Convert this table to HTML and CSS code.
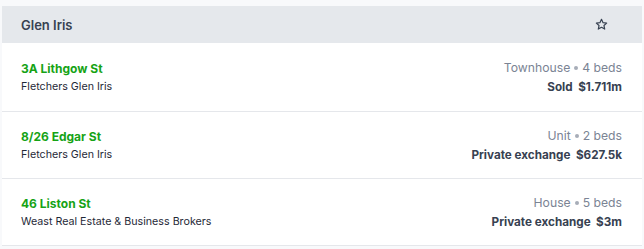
FILE: index.html
```html
<!DOCTYPE html>
<html lang="en">
<head>
<meta charset="utf-8">
<title>Glen Iris</title>
<link rel="stylesheet" href="styles.css">
</head>
<body>
<div class="page">
  <section class="card">
    <header class="card-head">
      <h2 class="suburb">Glen Iris</h2>
      <button class="fav" aria-label="Favourite">
        <svg width="13" height="13" viewBox="0 0 24 24" fill="none" stroke="currentColor" stroke-width="2.2" stroke-linejoin="round"><polygon points="12 2.5 14.9 8.6 21.5 9.4 16.6 13.9 17.9 20.5 12 17.2 6.1 20.5 7.4 13.9 2.5 9.4 9.1 8.6"/></svg>
      </button>
    </header>
    <ul class="list">
      <li class="row">
        <div class="left">
          <a class="addr" href="#">3A Lithgow St</a>
          <div class="agent">Fletchers Glen Iris</div>
        </div>
        <div class="right">
          <div class="meta">Townhouse <span class="dot"></span> 4 beds</div>
          <div class="price">Sold&nbsp; $1.711m</div>
        </div>
      </li>
      <li class="row">
        <div class="left">
          <a class="addr" href="#">8/26 Edgar St</a>
          <div class="agent">Fletchers Glen Iris</div>
        </div>
        <div class="right">
          <div class="meta">Unit <span class="dot"></span> 2 beds</div>
          <div class="price">Private exchange&nbsp; $627.5k</div>
        </div>
      </li>
      <li class="row">
        <div class="left">
          <a class="addr" href="#">46 Liston St</a>
          <div class="agent">Weast Real Estate &amp; Business Brokers</div>
        </div>
        <div class="right">
          <div class="meta">House <span class="dot"></span> 5 beds</div>
          <div class="price">Private exchange&nbsp; $3m</div>
        </div>
      </li>
    </ul>
  </section>
</div>
</body>
</html>
```

FILE: styles.css
```css
html, body {
  margin: 0;
  padding: 0;
  background: #f8f9fb;
  font-family: Inter, "Noto Sans", Arial, sans-serif;
}
.page {
  padding: 6px 2px 0 2px;
}
.card {
  background: #ffffff;
  border-bottom: 1px solid #e5e7eb;
}
.card-head {
  display: flex;
  align-items: center;
  justify-content: space-between;
  height: 37px;
  background: #e5e8ec;
  padding: 0 34px 0 19px;
}
.suburb {
  margin: 0;
  font-size: 13px;
  font-weight: 600;
  color: #374151;
}
.fav {
  display: flex;
  align-items: center;
  justify-content: center;
  border: 0;
  background: none;
  padding: 0;
  color: #374151;
}
.list {
  list-style: none;
  margin: 0;
  padding: 0;
}
.row {
  display: flex;
  justify-content: space-between;
  align-items: center;
  height: 67px;
  padding: 1px 20px 0 19px;
  box-sizing: border-box;
  border-top: 1px solid #e5e7eb;
}
.row:first-child {
  border-top: 0;
  height: 68px;
}
.left, .right {
  display: flex;
  flex-direction: column;
  gap: 2px;
}
.right {
  align-items: flex-end;
}
.addr {
  font-size: 12px;
  font-weight: 700;
  color: #16a316;
  text-decoration: none;
  line-height: 16px;
}
.agent {
  font-size: 10.7px;
  color: #1f2937;
  line-height: 16px;
}
.meta {
  font-size: 12.2px;
  color: #7b8494;
  line-height: 16px;
  display: flex;
  align-items: center;
  gap: 4px;
}
.dot {
  display: inline-block;
  width: 4px;
  height: 4px;
  border-radius: 50%;
  background: #a7adb8;
}
.price {
  font-size: 11.7px;
  font-weight: 700;
  color: #374151;
  line-height: 16px;
  padding-top: 1px;
}
```
